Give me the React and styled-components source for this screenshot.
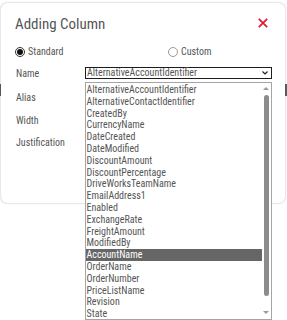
import React from 'react';
import styled, { createGlobalStyle } from 'styled-components';

const GlobalStyle = createGlobalStyle`
  html, body {
    margin: 0;
    padding: 0;
    overflow: hidden;
  }
  body {
    width: 287px;
    height: 320px;
    font-family: "Roboto Condensed", Roboto, sans-serif;
    font-stretch: condensed;
    background: linear-gradient(#fff 84px, #56616c 84px, #56616c 96px, #fff 96px);
  }
`;

const Page = styled.div`
  padding: 3px 2px 0 1px;
`;

const Card = styled.div`
  height: 200px;
  background: #fff;
  border-radius: 6px;
  box-shadow: 0 0 2px rgba(0, 0, 0, 0.35);
  padding: 0 13px 0 14px;
  box-sizing: border-box;
`;

const Header = styled.div`
  display: flex;
  align-items: center;
  justify-content: space-between;
  padding-top: 11px;
  height: 20px;
`;

const Title = styled.h2`
  margin: 0;
  font-size: 15px;
  line-height: 20px;
  font-weight: 400;
  color: #555;
`;

const CloseButton = styled.button`
  border: 0;
  background: none;
  padding: 0;
  margin: -3px 4px 0 0;
  width: 10px;
  height: 10px;
  display: flex;
  align-items: center;
  justify-content: center;
`;

const RadioRow = styled.div`
  display: grid;
  grid-template-columns: 153px 1fr;
  height: 12px;
  margin-top: 12px;
  align-items: center;
`;

const RadioLabel = styled.label`
  display: flex;
  align-items: center;
  gap: 3px;
  font-size: 10px;
  line-height: 12px;
  color: #555;
`;

const RadioCircle = styled.span`
  width: 10px;
  height: 10px;
  border-radius: 50%;
  box-sizing: border-box;
  border: 1px solid ${p => (p.checked ? '#333' : '#9a9a9a')};
  display: flex;
  align-items: center;
  justify-content: center;
  &::after {
    content: "";
    width: 6px;
    height: 6px;
    border-radius: 50%;
    background: ${p => (p.checked ? '#111' : 'transparent')};
  }
`;

const Form = styled.div`
  display: grid;
  grid-template-columns: 70px 1fr;
  grid-template-rows: 24px 24px 23px 20px;
  margin-top: 3px;
  align-items: center;
`;

const FieldLabel = styled.span`
  font-size: 10px;
  color: #555;
  padding-left: 1px;
`;

const Select = styled.div`
  position: relative;
  height: 12px;
  border: 1.5px solid #1c1c1c;
  box-sizing: border-box;
  display: flex;
  align-items: center;
  justify-content: space-between;
  padding: 0 3px 0 1px;
  font-size: 10px;
  color: #555;
  line-height: 1;
`;

const Input = styled.div`
  height: 12px;
  border: 1px solid #888;
  box-sizing: border-box;
`;

const List = styled.div`
  position: absolute;
  top: 13.5px;
  left: -1.5px;
  width: 187px;
  height: 238px;
  box-sizing: border-box;
  border: 1px solid #a5a5a5;
  background: #fff;
  display: flex;
  z-index: 2;
`;

const Items = styled.ul`
  flex: 1;
  margin: 0;
  padding: 1.6px 0 0 0;
  list-style: none;
`;

const Item = styled.li`
  height: 11.8px;
  line-height: 11.8px;
  padding-left: 1px;
  font-size: 10px;
  color: ${p => (p.selected ? '#fff' : '#555')};
  background: ${p => (p.selected ? '#666' : 'transparent')};
  white-space: nowrap;
`;

const Scrollbar = styled.div`
  width: 9px;
  display: flex;
  flex-direction: column;
  align-items: center;
  padding: 4.5px 0 5px;
  box-sizing: border-box;
`;

const Arrow = styled.span`
  width: 0;
  height: 0;
  border-left: 3px solid transparent;
  border-right: 3px solid transparent;
  ${p => (p.down ? 'border-top: 3px solid #999;' : 'border-bottom: 3px solid #999;')}
`;

const Thumb = styled.div`
  width: 5px;
  height: 201px;
  margin: 5px 0 auto;
  border-radius: 3px;
  background: #8c8c8c;
`;

const options = [
  'AlternativeAccountIdentifier',
  'AlternativeContactIdentifier',
  'CreatedBy',
  'CurrencyName',
  'DateCreated',
  'DateModified',
  'DiscountAmount',
  'DiscountPercentage',
  'DriveWorksTeamName',
  'EmailAddress1',
  'Enabled',
  'ExchangeRate',
  'FreightAmount',
  'ModifiedBy',
  'AccountName',
  'OrderName',
  'OrderNumber',
  'PriceListName',
  'Revision',
  'State',
];

const Chevron = () => (
  <svg width="6" height="4" viewBox="0 0 6 4">
    <path d="M0.5 0.5 L3 3 L5.5 0.5" fill="none" stroke="#222" strokeWidth="1.2" />
  </svg>
);

const App = () => (
  <>
    <GlobalStyle />
    <Page>
      <Card>
        <Header>
          <Title>Adding Column</Title>
          <CloseButton aria-label="Close">
            <svg width="10" height="10" viewBox="0 0 10 10">
              <path d="M0.8 0.8 L9.2 9.2 M9.2 0.8 L0.8 9.2" stroke="#e0182d" strokeWidth="1.7" />
            </svg>
          </CloseButton>
        </Header>
        <RadioRow>
          <RadioLabel><RadioCircle checked />Standard</RadioLabel>
          <RadioLabel><RadioCircle />Custom</RadioLabel>
        </RadioRow>
        <Form>
          <FieldLabel>Name</FieldLabel>
          <Select>
            <span>AlternativeAccountIdentifier</span>
            <Chevron />
            <List>
              <Items>
                {options.map(o => (
                  <Item key={o} selected={o === 'AccountName'}>{o}</Item>
                ))}
              </Items>
              <Scrollbar>
                <Arrow />
                <Thumb />
                <Arrow down />
              </Scrollbar>
            </List>
          </Select>
          <FieldLabel>Alias</FieldLabel>
          <Input />
          <FieldLabel>Width</FieldLabel>
          <Input />
          <FieldLabel>Justification</FieldLabel>
          <Input />
        </Form>
      </Card>
    </Page>
  </>
);

export default App;
